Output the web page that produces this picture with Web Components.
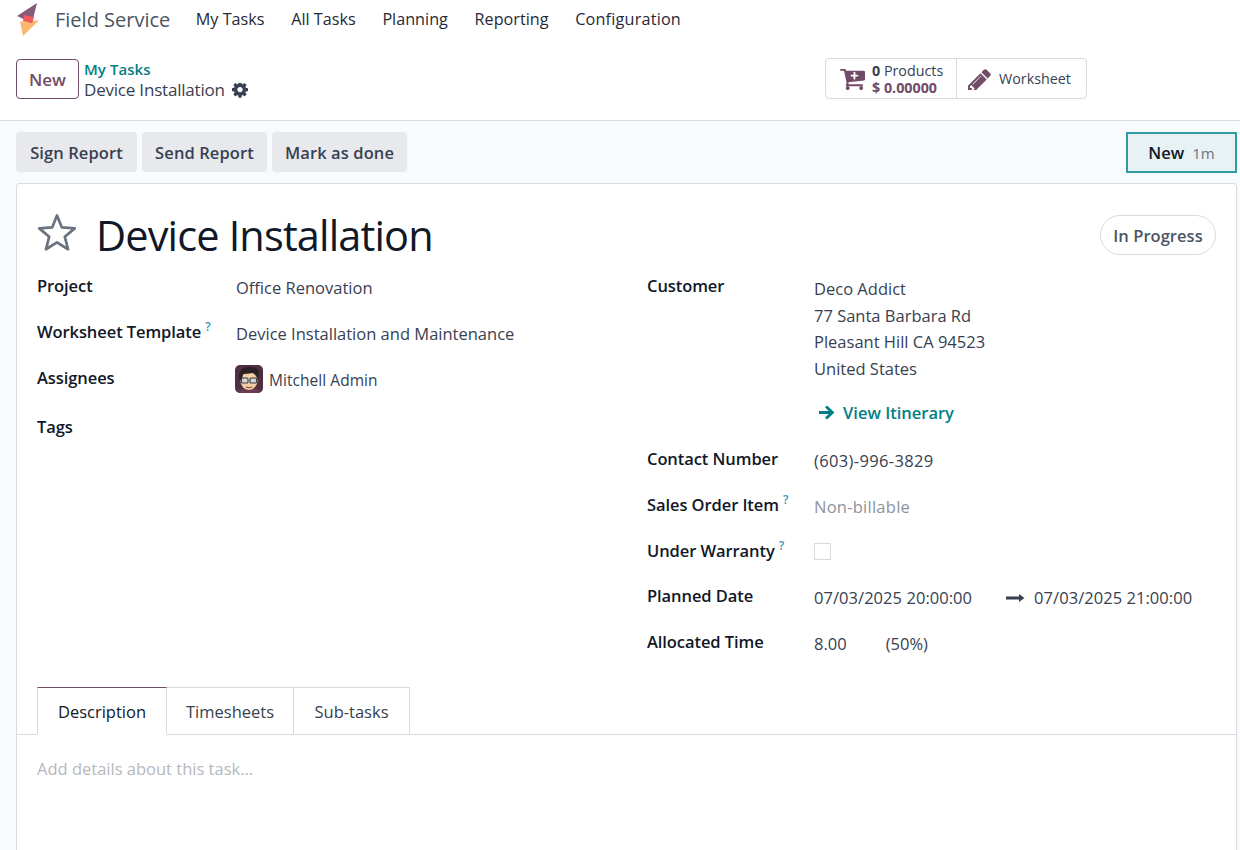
<!DOCTYPE html>
<html lang="en">
<head>
<meta charset="utf-8">
<title>Device Installation</title>
<style>
html,body{margin:0;height:850px;overflow:hidden;background:#f9fafb;}
body{font-family:"Open Sans","Noto Sans",sans-serif;font-size:16.5px;color:#374151;letter-spacing:0;}
</style>
</head>
<body>
<x-app></x-app>
<template id="t-app">
<style>
:host{display:flex;flex-direction:column;height:850px;}
.stage{flex:1;display:flex;flex-direction:column;padding:11px 3px 0 16px;min-height:0;}
</style>
<x-navbar></x-navbar>
<x-control-panel></x-control-panel>
<div class="stage">
<x-statusbar></x-statusbar>
<x-sheet></x-sheet>
</div>
</template>

<template id="t-navbar">
<style>
:host{display:flex;align-items:center;height:40px;background:#fff;padding-left:16px;}
svg{width:25px;height:36px;display:block;flex:none;}
.brand{font-size:20px;color:#4b5563;margin:0 25.500px 2px 14px;letter-spacing:0;}
nav{display:flex;gap:26.700px;color:#1f2937;font-size:16.200px;letter-spacing:0;margin-bottom:2px;}
.wide{letter-spacing:.2px;}
</style>
<svg viewBox="0 0 25 36" aria-hidden="true">
<polygon points="4,19.500 23,18.500 7,34" fill="#fbb86f"/>
<polygon points="21,1 1,14 16,21" fill="#875a7b"/>
<polygon points="8,13 18,15 16,21 7,19" fill="#f05a5a"/>
</svg>
<span class="brand">Field Service</span>
<nav><span>My Tasks</span><span>All Tasks</span><span>Planning</span><span>Reporting</span><span class="wide">Configuration</span></nav>
</template>

<template id="t-cp">
<style>
:host{display:flex;align-items:flex-start;height:80px;background:#fff;border-bottom:1px solid #d8dadd;box-sizing:content-box;padding:0 0 0 16px;}
.new{box-sizing:border-box;width:63px;height:40px;margin-top:19px;display:flex;align-items:center;justify-content:center;border:1px solid #714b67;border-radius:4px;color:#714b67;font-weight:600;font-size:17px;}
.crumb{margin:19px 0 0 5px;width:171px;display:flex;flex-direction:column;line-height:21px;}
.crumb b{color:#017e84;font-weight:600;font-size:15px;letter-spacing:.05px;}
.cur{display:flex;align-items:center;gap:7px;font-size:17px;letter-spacing:-.2px;margin-top:-1px;}
.cur svg{width:16px;height:16px;fill:#374151;margin-top:2px;}
.stats{margin:18px 0 0 570px;display:flex;width:262px;height:41px;box-sizing:border-box;border:1px solid #d8dadd;border-radius:4px;}
</style>
<div class="new">New</div>
<div class="crumb"><b>My Tasks</b><div class="cur"><span>Device Installation</span>
<svg viewBox="0 0 1536 1536"><path d="M1024 640q0-106-75-181t-181-75-181 75-75 181 75 181 181 75 181-75 75-181zm512-109v222q0 12-8 23t-20 13l-185 28q-19 54-39 91 35 50 107 138 10 12 10 25t-9 23q-27 37-99 108t-94 71q-12 0-26-9l-138-108q-44 23-91 38-16 136-29 186-7 28-36 28h-222q-14 0-24.500-8.500t-11.500-21.500l-28-184q-49-16-90-37l-141 107q-10 9-25 9-14 0-25-11-126-114-165-168-7-10-7-23 0-12 8-23 15-21 51-66.500t54-70.500q-27-50-41-99l-183-27q-13-2-21-12.500t-8-23.500v-222q0-12 8-23t19-13l186-28q14-46 39-92-40-57-107-138-10-12-10-24 0-10 9-23 26-36 98.500-107.500t94.500-71.500q13 0 26 10l138 107q44-23 91-38 16-136 29-186 7-28 36-28h222q14 0 24.500 8.500t11.500 21.500l28 184q49 16 90 37l142-107q9-9 24-9 13 0 25 10 129 119 165 170 7 8 7 22 0 12-8 23-15 21-51 66.500t-54 70.500q26 50 41 98l183 28q13 2 21 12.500t8 23.500z"/></svg></div></div>
<div class="stats">
<x-stat icon="cart" width="130"><div><b>0</b> Products</div><div><b style="color:#714b67">$ 0.00000</b></div></x-stat>
<x-stat icon="pencil" width="130" divider><div>Worksheet</div></x-stat>
</div>
</template>

<template id="t-stat">
<style>
:host{display:flex;align-items:center;box-sizing:border-box;height:100%;font-size:14.3px;line-height:17px;color:#374151;letter-spacing:0;}
:host([divider]){border-left:1px solid #d8dadd;}
svg{fill:#714b67;display:block;flex:none;}
::slotted(div){white-space:nowrap;}
.txt{display:block;}
</style>
<span id="i"></span><span class="txt"><slot></slot></span>
</template>

<template id="t-statusbar">
<style>
:host{display:flex;justify-content:space-between;height:40px;margin-bottom:11px;flex:none;}
.l{display:flex;gap:5px;}
.b{display:flex;align-items:center;justify-content:center;height:40px;background:#e7e9ed;border-radius:4px;color:#374151;font-weight:600;font-size:16.500px;letter-spacing:.1px;box-sizing:border-box;}
.s{box-sizing:border-box;width:111px;height:41px;display:flex;align-items:center;justify-content:center;gap:8px;background:#e6f2f3;border:2px solid #2f9a9f;color:#111827;font-weight:600;}
.s span{font-weight:400;font-size:15px;color:#6b7280;}
</style>
<div class="l">
<div class="b" style="width:121px">Sign Report</div>
<div class="b" style="width:125px">Send Report</div>
<div class="b" style="width:135px">Mark as done</div>
</div>
<div class="s">New <span>1m</span></div>
</template>

<template id="t-sheet">
<style>
:host{display:flex;flex-direction:column;flex:1;min-height:0;background:#fff;border:1px solid #d8dadd;border-bottom:0;border-radius:4px 4px 0 0;}
.head{display:flex;align-items:flex-start;height:91px;padding:24px 20px 0;box-sizing:border-box;flex:none;}
.head svg{width:40px;height:38px;display:block;flex:none;margin-top:5px;}
h1{margin:2px 0 0 19px;font-size:41.500px;font-weight:400;color:#111827;flex:1;letter-spacing:-.85px;line-height:50px;}
.pill{box-sizing:border-box;width:116px;height:40px;border:1px solid #d8dadd;border-radius:20px;display:flex;align-items:center;justify-content:center;font-weight:600;color:#4b5563;margin-top:7px;letter-spacing:.05px;}
.cols{display:grid;grid-template-columns:610px 1fr;padding:0 20px;height:412px;flex:none;}
.col{display:flex;flex-direction:column;}
.left{--value-x:199px;}
.right{--value-x:167px;}
.addr{line-height:26.500px;margin-top:-1px;}
.link{display:flex;align-items:center;gap:8px;color:#017e84;font-weight:600;margin-top:16.500px;height:28px;padding-left:4px;letter-spacing:0;}
.link svg{width:17px;height:15px;fill:#017e84;}
.user{display:flex;align-items:center;gap:6px;font-size:15.500px;margin:-4px 0 0 -1px;letter-spacing:.05px;}
.user span{padding-top:2px;}
.user svg{width:28px;height:28px;display:block;border-radius:5px;flex:none;}
.muted{color:#8f939a;letter-spacing:.25px;}
.phone{letter-spacing:.35px;}
.check{display:block;box-sizing:border-box;width:17px;height:17px;border:1px solid #d8dadd;margin-top:1px;}
.date{display:flex;align-items:center;white-space:nowrap;letter-spacing:.05px;}
.date svg{width:19px;height:10px;margin:0 9px 0 34px;fill:#374151;flex:none;}
.alloc{display:flex;gap:39px;}
.tabs{display:flex;padding:0 20px;height:48px;box-sizing:border-box;border-bottom:1px solid #d8dadd;flex:none;}
.tab{display:flex;align-items:center;justify-content:center;box-sizing:border-box;height:48px;border:1px solid #d8dadd;border-left:0;color:#374151;}
.tab.on{border-left:1px solid #d8dadd;border-top-color:#714b67;border-bottom-color:#fff;color:#111827;}
.body{padding:22px 20px;color:#b5b8bd;}
</style>
<div class="head">
<svg viewBox="0 0 40 39"><polygon points="20,2.500 25,14.800 38.200,15.800 28,24.300 31.300,37.200 20,30.200 8.700,37.200 12,24.300 1.800,15.800 15,14.800" fill="none" stroke="#6b7280" stroke-width="2.800" stroke-linejoin="round"/></svg>
<h1>Device Installation</h1>
<div class="pill">In Progress</div>
</div>
<div class="cols">
<div class="col left">
<x-field label="Project" h="46">Office Renovation</x-field>
<x-field label="Worksheet Template" help h="46">Device Installation and Maintenance</x-field>
<x-field label="Assignees" h="49"><div class="user">
<svg viewBox="0 0 28 28"><rect width="28" height="28" fill="#4f2f42"/><path d="M2 28q1-5 12-5t12 5z" fill="#6b3a52"/><ellipse cx="14" cy="16" rx="8.500" ry="9" fill="#f3cfa6"/><path d="M4.500 15Q2 3 13 2q10-1 11 6l-1 7q-1-6-5-7-6 1-10 1l-1 6z" fill="#2b2024"/><rect x="6.500" y="13" width="6.500" height="5" rx="1" fill="#cfd6da" stroke="#3b3b3b" stroke-width="1.100"/><rect x="15" y="13" width="6.500" height="5" rx="1" fill="#cfd6da" stroke="#3b3b3b" stroke-width="1.100"/><path d="M11 22q3 1.500 6 0" stroke="#8a4a3a" stroke-width="1.200" fill="none"/></svg>
<span>Mitchell Admin</span></div></x-field>
<x-field label="Tags" h="46"></x-field>
</div>
<div class="col right">
<x-field label="Customer"><div class="addr">Deco Addict<br>77 Santa Barbara Rd<br>Pleasant Hill CA 94523<br>United States</div>
<div class="link"><svg viewBox="0 0 17 15"><path d="M9 .500 7 2.500 10.800 6H1V9H10.800L7 12.500 9 14.500 16.500 7.500z"/></svg><span>View Itinerary</span></div></x-field>
<x-field label="Contact Number" h="46" style="margin-top:21.500px"><span class="phone">(603)-996-3829</span></x-field>
<x-field label="Sales Order Item" help h="46"><span class="muted">Non-billable</span></x-field>
<x-field label="Under Warranty" help h="45"><span class="check"></span></x-field>
<x-field label="Planned Date" h="46"><div class="date"><span>07/03/2025 20:00:00</span><svg viewBox="0 0 19 10"><path d="M0 3.500h13V1l5.500 4-5.500 4V6.500H0z"/></svg><span>07/03/2025 21:00:00</span></div></x-field>
<x-field label="Allocated Time" h="46"><div class="alloc"><span>8.00</span><span>(50%)</span></div></x-field>
</div>
</div>
<div class="tabs">
<div class="tab on" style="width:130px">Description</div>
<div class="tab" style="width:127px">Timesheets</div>
<div class="tab" style="width:116px">Sub-tasks</div>
</div>
<div class="body">Add details about this task...</div>
</template>

<template id="t-field">
<style>
:host{display:grid;grid-template-columns:var(--value-x) 1fr;align-items:start;flex:none;box-sizing:border-box;}
.label{font-weight:600;color:#111827;line-height:22px;display:flex;align-items:flex-start;gap:4px;letter-spacing:-.08px;}
sup{font-size:12px;line-height:12px;color:#3a97b8;font-weight:600;}
.value{line-height:22px;padding-top:2px;}
</style>
<div class="label"><span id="l"></span></div>
<div class="value"><slot></slot></div>
</template>

<script>
function mount(el,id){
  const root=el.attachShadow({mode:"open"});
  root.appendChild(document.getElementById(id).content.cloneNode(true));
  return root;
}
class XField extends HTMLElement{
  constructor(){super();const r=mount(this,"t-field");
    r.getElementById("l").textContent=this.getAttribute("label");
    if(this.hasAttribute("help")){const s=document.createElement("sup");s.textContent="?";r.querySelector(".label").appendChild(s);}
    if(this.getAttribute("h"))this.style.height=this.getAttribute("h")+"px";
  }
}
const ICONS={
cart:'<svg style="width:25px;height:24px;margin:0 7px 0 14px" viewBox="0 0 1664 1600"><path d="M1216 576q0-26-19-45t-45-19h-128v-128q0-26-19-45t-45-19-45 19-19 45v128h-128q-26 0-45 19t-19 45 19 45 45 19h128v128q0 26 19 45t45 19 45-19 19-45v-128h128q26 0 45-19t19-45zm-576 832q0 53-37.500 90.500t-90.500 37.500-90.500-37.500-37.500-90.500 37.500-90.500 90.500-37.500 90.500 37.500 37.500 90.500zm896 0q0 53-37.500 90.500t-90.500 37.500-90.500-37.500-37.500-90.500 37.500-90.500 90.500-37.500 90.500 37.500 37.500 90.500zm128-1088v512q0 24-16 42.500t-41 21.500l-1044 122q1 7 4.500 21.500t6 26.500 2.500 22q0 16-24 64h920q26 0 45 19t19 45-19 45-45 19h-1024q-26 0-45-19t-19-45q0-14 11-39.500t29.500-59.500 20.500-38l-177-823h-204q-26 0-45-19t-19-45 19-45 45-19h256q16 0 28.500 6.500t20 15.500 13 24.500 7.500 26.500 5.500 29.500 4.500 25.500h1201q26 0 45 19t19 45z" fill-rule="evenodd"/></svg>',
pencil:'<svg style="width:23px;height:23px;margin:0 8px 0 11px" viewBox="0 0 1536 1536"><path d="M363 1536l91-91-235-235-91 91v107h128v128h107zm523-928q0-22-22-22-10 0-17 7l-542 542q-7 7-7 17 0 22 22 22 10 0 17-7l542-542q7-7 7-17zm-54-192l416 416-832 832h-416v-416zm683 96q0 53-37 90l-166 166-416-416 166-165q36-38 90-38 53 0 91 38l235 234q37 39 37 91z"/></svg>'};
class XStat extends HTMLElement{
  constructor(){super();const r=mount(this,"t-stat");
    r.getElementById("i").innerHTML=ICONS[this.getAttribute("icon")];
    this.style.width=this.getAttribute("width")+"px";
  }
}
class Simple extends HTMLElement{
  constructor(){super();mount(this,this.constructor.tpl);}
}
const reg=(n,t)=>customElements.define(n,class extends Simple{static tpl=t});
customElements.define("x-field",XField);
customElements.define("x-stat",XStat);
reg("x-navbar","t-navbar");
reg("x-control-panel","t-cp");
reg("x-statusbar","t-statusbar");
reg("x-sheet","t-sheet");
reg("x-app","t-app");
</script>
</body>
</html>
